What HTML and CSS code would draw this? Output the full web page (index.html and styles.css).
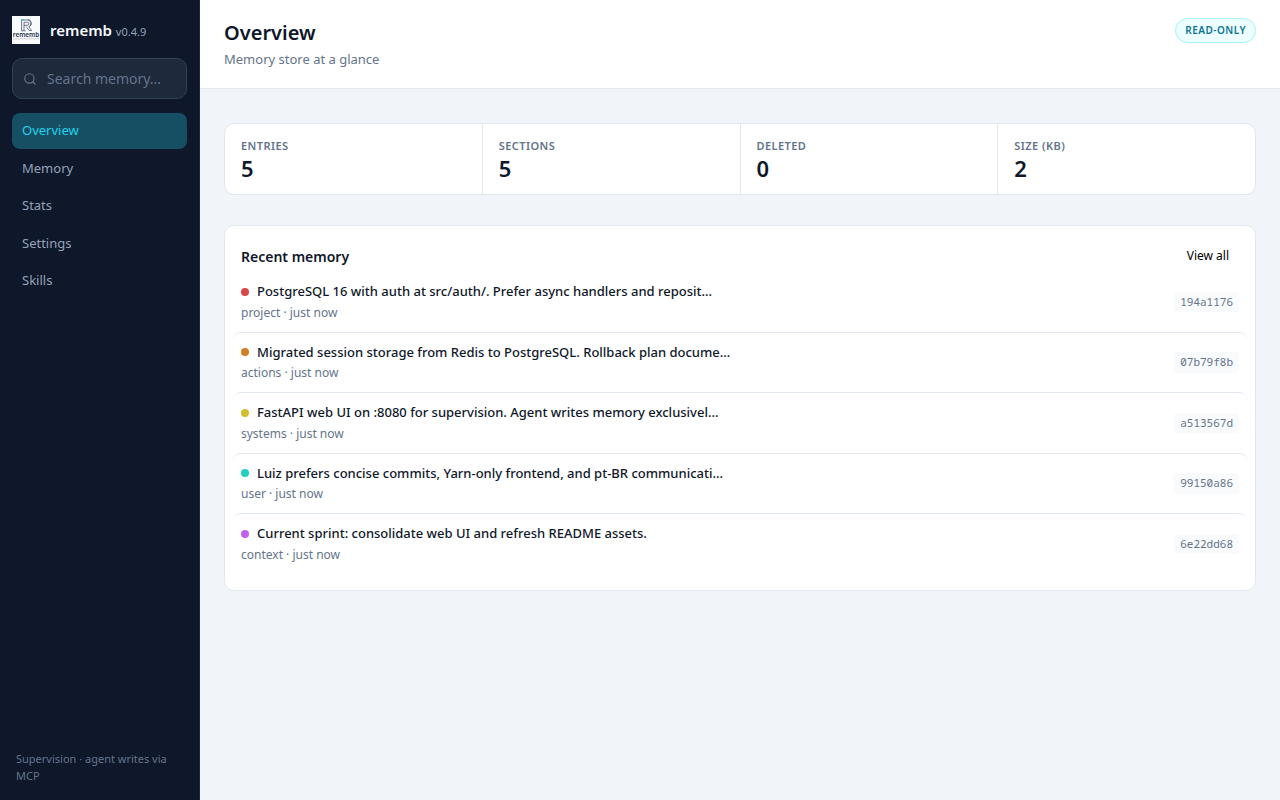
FILE: index.html
```html
<!DOCTYPE html>
<html lang="en">
<head>
<meta charset="utf-8">
<title>rememb</title>
<link rel="stylesheet" href="styles.css">
</head>
<body>
<aside class="sidebar">
  <div class="brand">
    <svg class="logo" viewBox="0 0 28 28" aria-label="rememb">
      <rect width="28" height="28" fill="#f8fafc"/>
      <g fill="none" stroke="#4a5670" stroke-width=".8">
        <path d="M9.6 14.6V4h6.2a3.4 3.4 0 0 1 1 6.6l2.8 4h-2.4l-3-4M12 14.6V6.3h3.4a1.5 1.5 0 0 1 0 3H12M16 3.4a4 4 0 0 1 1.8 7M9.2 14.8h4.4"/>
      </g>
      <path d="M9 3.6h3" stroke="#3fc4d4" stroke-width="1.2"/>
      <text class="logo-name" x="14" y="20.6" text-anchor="middle" textLength="26.5" lengthAdjust="spacingAndGlyphs">rememb</text>
      <path d="M1 22.8h26" stroke="#c6cad3" stroke-width="1" stroke-dasharray="1.8 .4"/>
    </svg>
    <div class="brand-text"><span class="brand-name">rememb</span> <span class="version">v0.4.9</span></div>
  </div>
  <label class="search">
    <svg class="search-icon" viewBox="0 0 24 24"><circle cx="11" cy="11" r="8"/><path d="m21 21-4.3-4.3"/></svg>
    <input type="text" placeholder="Search memory...">
  </label>
  <nav class="nav">
    <a class="nav-item active">Overview</a>
    <a class="nav-item">Memory</a>
    <a class="nav-item">Stats</a>
    <a class="nav-item">Settings</a>
    <a class="nav-item">Skills</a>
  </nav>
  <footer class="side-foot">Supervision · agent writes via MCP</footer>
</aside>
<main class="main">
  <header class="topbar">
    <div>
      <h1>Overview</h1>
      <p class="subtitle">Memory store at a glance</p>
    </div>
    <span class="badge">READ-ONLY</span>
  </header>
  <div class="content">
    <section class="stats">
      <div class="stat"><div class="stat-label">ENTRIES</div><div class="stat-value">5</div></div>
      <div class="stat"><div class="stat-label">SECTIONS</div><div class="stat-value">5</div></div>
      <div class="stat"><div class="stat-label">DELETED</div><div class="stat-value">0</div></div>
      <div class="stat"><div class="stat-label">SIZE (KB)</div><div class="stat-value">2</div></div>
    </section>
    <section class="card">
      <div class="card-head"><h2>Recent memory</h2><button class="view-all">View all</button></div>
      <div class="row"><div><div class="row-title"><i class="dot red"></i>PostgreSQL 16 with auth at src/auth/. Prefer async handlers and reposit…</div><div class="meta">project · just now</div></div><code>194a1176</code></div>
      <div class="row"><div><div class="row-title"><i class="dot orange"></i>Migrated session storage from Redis to PostgreSQL. Rollback plan docume…</div><div class="meta">actions · just now</div></div><code>07b79f8b</code></div>
      <div class="row"><div><div class="row-title"><i class="dot yellow"></i>FastAPI web UI on :8080 for supervision. Agent writes memory exclusivel…</div><div class="meta">systems · just now</div></div><code>a513567d</code></div>
      <div class="row"><div><div class="row-title"><i class="dot teal"></i>Luiz prefers concise commits, Yarn-only frontend, and pt-BR communicati…</div><div class="meta">user · just now</div></div><code>99150a86</code></div>
      <div class="row"><div><div class="row-title"><i class="dot purple"></i>Current sprint: consolidate web UI and refresh README assets.</div><div class="meta">context · just now</div></div><code>6e22dd68</code></div>
    </section>
  </div>
</main>
</body>
</html>
```
FILE: styles.css
```css
* { box-sizing: border-box; }
body {
  margin: 0;
  height: 100vh;
  display: flex;
  font: 14px/1.5 "Noto Sans", sans-serif;
  color: #0f172a;
  background: #f1f5f9;
}
h1, h2, p { margin: 0; }
.sidebar {
  width: 200px;
  flex: none;
  display: flex;
  flex-direction: column;
  padding: 16px 12px;
  background: #0f172a;
  border-right: 1px solid #1e293b;
}
.brand { display: flex; align-items: center; gap: 10px; height: 28px; }
.logo { width: 28px; height: 28px; flex: none; }
.logo-name { font: 600 6.4px "Noto Sans", sans-serif; fill: #26324f; }
.brand-text { white-space: nowrap; font-size: 15px; }
.brand-name { font-weight: 600; color: #f8fafc; }
.version { font-size: 11px; color: #94a3b8; }
.search {
  display: flex;
  align-items: center;
  gap: 10px;
  height: 41px;
  margin-top: 14px;
  padding: 0 10px;
  border: 1px solid #334155;
  border-radius: 10px;
  background: #1e293b;
}
.search-icon { width: 14px; height: 14px; flex: none; fill: none; stroke: #64748b; stroke-width: 2; stroke-linecap: round; }
.search input {
  min-width: 0;
  width: 100%;
  padding: 0;
  border: 0;
  outline: 0;
  background: transparent;
  font: 14px "Noto Sans", sans-serif;
  color: #f8fafc;
}
.search input::placeholder { color: #64748b; }
.nav { display: flex; flex-direction: column; gap: 2px; margin-top: 14px; }
.nav-item { padding: 8px 10px; border-radius: 8px; font-size: 13px; color: #94a3b8; }
.nav-item.active { background: #164e63; color: #22d3ee; }
.side-foot { margin-top: auto; padding: 0 4px; font-size: 11px; color: #64748b; }
.main { flex: 1; min-width: 0; }
.topbar {
  display: flex;
  justify-content: space-between;
  align-items: flex-start;
  height: 89px;
  padding: 18px 24px;
  background: #fff;
  border-bottom: 1px solid #e2e8f0;
}
h1 { font-size: 20px; font-weight: 600; line-height: 30px; }
.subtitle { margin-top: 2px; font-size: 13px; color: #64748b; }
.badge {
  padding: 4px 9px;
  border: 1px solid #a5f3fc;
  border-radius: 999px;
  background: #ecfeff;
  color: #0e7490;
  font-size: 10px;
  font-weight: 600;
  letter-spacing: .5px;
}
.content { padding: 34px 24px; display: flex; flex-direction: column; gap: 30px; }
.stats, .card { border: 1px solid #e2e8f0; border-radius: 10px; }
.stats {
  display: grid;
  grid-template-columns: repeat(4, 1fr);
  gap: 1px;
  height: 72px;
  overflow: hidden;
  background: #e2e8f0;
}
.stat { padding: 14px 16px; background: #fff; }
.stat-label { font-size: 11px; line-height: 16.5px; font-weight: 600; letter-spacing: .44px; color: #64748b; }
.stat-value { font-size: 22px; line-height: 26px; font-weight: 600; }
.card { padding: 16px 8px; background: #fff; }
.card-head { display: flex; align-items: center; justify-content: space-between; height: 28px; margin-bottom: 2px; padding: 0 8px; }
h2 { font-size: 14px; font-weight: 600; }
.view-all { padding: 0 10px 2px; border: 0; background: none; font: 12px "Noto Sans", sans-serif; color: #000; }
.row { display: flex; align-items: center; justify-content: space-between; padding: 10px 8px; border-radius: 8px; }
.row + .row { border-top: 1px solid #e2e8f0; }
.row-title { display: flex; align-items: center; gap: 8px; font-size: 13px; font-weight: 500; }
.dot { width: 8px; height: 8px; border-radius: 50%; }
.red { background: #d94848; }
.orange { background: #d08020; }
.yellow { background: #d0c030; }
.teal { background: #20d0c0; }
.purple { background: #c060f0; }
.meta { margin-top: 2px; font-size: 12px; color: #64748b; }
code { padding: 2px 6px; border-radius: 4px; background: #f8fafc; font: 11px/16.5px "Noto Sans Mono", "DejaVu Sans Mono", monospace; color: #64748b; }
```
